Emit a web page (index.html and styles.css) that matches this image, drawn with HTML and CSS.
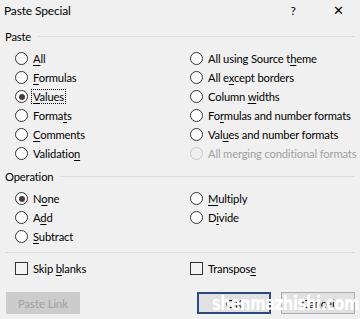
FILE: index.html
```html
<!DOCTYPE html>
<html lang="en">
<head>
    <meta charset="UTF-8">
    <title>Paste Special</title>
    <link rel="stylesheet" href="styles.css">
</head>
<body>
    <div class="dialog">
        <div class="titlebar">
            <span class="title">Paste Special</span>
            <span class="help">?</span>
            <span class="close">&#x2715;</span>
        </div>

        <div class="group-head"><span>Paste</span><i></i></div>
        <div class="options">
            <label class="opt"><span class="radio"></span><span><u>A</u>ll</span></label>
            <label class="opt"><span class="radio"></span><span>All using Source t<u>h</u>eme</span></label>
            <label class="opt"><span class="radio"></span><span><u>F</u>ormulas</span></label>
            <label class="opt"><span class="radio"></span><span>All e<u>x</u>cept borders</span></label>
            <label class="opt"><span class="radio on"></span><span class="focus"><u>V</u>alues</span></label>
            <label class="opt"><span class="radio"></span><span>Column <u>w</u>idths</span></label>
            <label class="opt"><span class="radio"></span><span>Forma<u>t</u>s</span></label>
            <label class="opt"><span class="radio"></span><span>Fo<u>r</u>mulas and number formats</span></label>
            <label class="opt"><span class="radio"></span><span><u>C</u>omments</span></label>
            <label class="opt"><span class="radio"></span><span>Val<u>u</u>es and number formats</span></label>
            <label class="opt"><span class="radio"></span><span>Validatio<u>n</u></span></label>
            <label class="opt disabled"><span class="radio"></span><span>All merging conditional formats</span></label>
        </div>

        <div class="group-head op"><span>Operation</span><i></i></div>
        <div class="options">
            <label class="opt"><span class="radio on"></span><span>N<u>o</u>ne</span></label>
            <label class="opt"><span class="radio"></span><span><u>M</u>ultiply</span></label>
            <label class="opt"><span class="radio"></span><span>A<u>d</u>d</span></label>
            <label class="opt"><span class="radio"></span><span>D<u>i</u>vide</span></label>
            <label class="opt"><span class="radio"></span><span><u>S</u>ubtract</span></label>
        </div>

        <div class="sep"></div>

        <div class="options checks">
            <label class="opt"><span class="check"></span><span>Skip <u>b</u>lanks</span></label>
            <label class="opt"><span class="check"></span><span>Transpos<u>e</u></span></label>
        </div>

        <div class="buttons">
            <button class="btn" disabled>Paste <u>L</u>ink</button>
            <span class="spacer"></span>
            <button class="btn default">OK</button>
            <button class="btn">Cancel</button>
            <span class="watermark">shenmazhishi.com</span>
        </div>
    </div>
</body>
</html>
```

FILE: styles.css
```css
body {
    margin: 0;
    background-color: #f0f0f0;
    font-family: Lato, "Noto Sans", sans-serif;
    font-size: 11.2px;
    letter-spacing: -0.15px;
    color: #000;
}

.dialog {
    width: 360px;
    height: 319px;
    position: relative;
    overflow: hidden;
}

.titlebar {
    display: flex;
    align-items: center;
    height: 20px;
    padding: 0 0 0 4px;
    font-size: 12px;
}

.title {
    flex: 1;
}

.help {
    width: 20px;
    text-align: center;
    margin-right: 25px;
}

.close {
    width: 20px;
    text-align: center;
    margin-right: 12px;
    font-size: 13px;
}

.group-head {
    display: flex;
    align-items: center;
    height: 16px;
    margin-top: 8px;
    padding: 0 5px 0 5px;
}

.group-head i {
    flex: 1;
    height: 1px;
    background-color: #dcdcdc;
    margin-left: 7px;
}

.group-head.op {
    margin-top: 5px;
}

.options {
    display: grid;
    grid-template-columns: 175px 170px;
    padding: 5px 0 0 15px;
}

.opt {
    display: flex;
    align-items: center;
    height: 19px;
    white-space: nowrap;
}

.opt u {
    text-decoration-thickness: 1px;
    text-underline-offset: 2px;
}

.radio {
    width: 11px;
    height: 11px;
    border: 1px solid #333;
    border-radius: 50%;
    background-color: #fff;
    margin-right: 5px;
    position: relative;
    flex: none;
}

.radio.on::after {
    content: "";
    position: absolute;
    left: 2.5px;
    top: 2.5px;
    width: 6px;
    height: 6px;
    border-radius: 50%;
    background-color: #4a3b3b;
}

.disabled {
    color: #a0a0a0;
}

.disabled .radio {
    border-color: #c8c8c8;
    background-color: #f0f0f0;
}

.focus {
    outline: 1px dotted #000;
    outline-offset: 0;
    padding: 0 1px;
    margin-left: -1px;
}

.sep {
    height: 1px;
    background-color: #dcdcdc;
    margin: 6px 5px 0 5px;
}

.checks {
    padding-top: 6px;
}

.check {
    width: 11px;
    height: 11px;
    border: 1px solid #333;
    background-color: #f4f4f4;
    margin-right: 5px;
    flex: none;
}

.buttons {
    display: flex;
    margin-top: 14px;
    padding: 0 5px 0 6px;
    position: relative;
}

.spacer {
    flex: 1;
}

.btn {
    width: 74px;
    height: 22px;
    border: 1px solid #adadad;
    background-color: #e1e1e1;
    font-family: inherit;
    font-size: 11.2px;
    color: #000;
    padding: 0;
}

.btn u {
    text-decoration: none;
}

.btn[disabled] {
    background-color: #cccccc;
    border-color: #cccccc;
    color: #a0a0a0;
}

.btn.default {
    border: 2px solid #2b4a7e;
    margin-right: 10px;
}

.watermark {
    position: absolute;
    left: 212px;
    top: -1px;
    font-family: "DejaVu Sans Condensed", "DejaVu Sans", sans-serif;
    font-weight: bold;
    font-size: 20px;
    color: #fff;
    letter-spacing: -0.5px;
    transform: scaleX(0.82);
    transform-origin: left center;
}
```
